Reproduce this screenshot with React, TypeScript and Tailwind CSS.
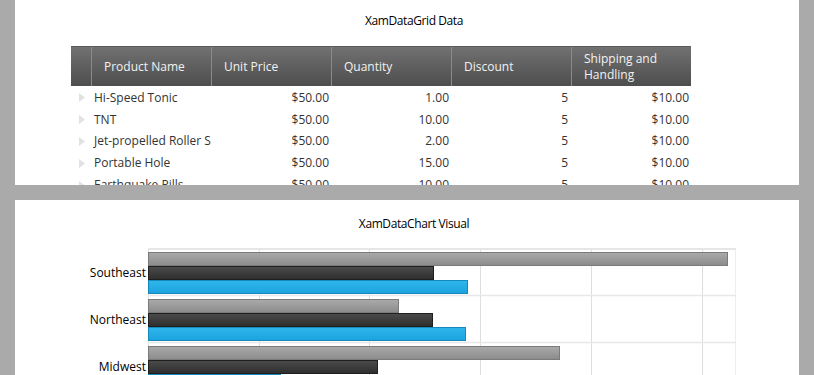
const rows = [
    { name: "Hi-Speed Tonic", price: "$50.00", qty: "1.00", discount: "5", shipping: "$10.00" },
    { name: "TNT", price: "$50.00", qty: "10.00", discount: "5", shipping: "$10.00" },
    { name: "Jet-propelled Roller Skates", price: "$50.00", qty: "2.00", discount: "5", shipping: "$10.00" },
    { name: "Portable Hole", price: "$50.00", qty: "15.00", discount: "5", shipping: "$10.00" },
    { name: "Earthquake Pills", price: "$50.00", qty: "10.00", discount: "5", shipping: "$10.00" },
];

const headers = ["Product Name", "Unit Price", "Quantity", "Discount", "Shipping and Handling"];

// widths in px for each series, measured against the plot
const regions = [
    { label: "Southeast", bars: [579, 285, 319] },
    { label: "Northeast", bars: [250, 284, 317] },
    { label: "Midwest", bars: [411, 229, 132] },
];

const BAND = 47;

function HeaderCell({ text }: { text: string }) {
    return (
        <div className="w-[120px] h-full flex items-center pl-3 pr-2 border-l border-[#8a8a8a] text-[12px] leading-[16px] text-[#f2f2f2]">
            <span className="w-[90px]">{text}</span>
        </div>
    );
}

function Chart() {
    const series = [
        { fill: "url(#gGray)", stroke: "#7a7a7a" },
        { fill: "url(#gDark)", stroke: "#1f1f1f" },
        { fill: "url(#gBlue)", stroke: "#1788bb" },
    ];
    return (
        <svg width={600} height={140} className="block">
            <defs>
                <linearGradient id="gGray" x1="0" y1="0" x2="0" y2="1">
                    <stop offset="0" stopColor="#aaaaaa" />
                    <stop offset="1" stopColor="#8b8b8b" />
                </linearGradient>
                <linearGradient id="gDark" x1="0" y1="0" x2="0" y2="1">
                    <stop offset="0" stopColor="#4b4b4b" />
                    <stop offset="1" stopColor="#2e2e2e" />
                </linearGradient>
                <linearGradient id="gBlue" x1="0" y1="0" x2="0" y2="1">
                    <stop offset="0" stopColor="#2fb6ec" />
                    <stop offset="1" stopColor="#1ca3df" />
                </linearGradient>
            </defs>
            {[0, 111, 221, 332, 443, 554].map((x) => (
                <line key={x} x1={x + 0.5} y1={0} x2={x + 0.5} y2={140} stroke="#dedede" strokeWidth={1} />
            ))}
            <line x1={587.5} y1={0} x2={587.5} y2={140} stroke="#eeeeee" strokeWidth={1} />
            <line x1={0} y1={1} x2={588} y2={1} stroke="#e6e6e6" strokeWidth={2} />
            {[BAND, BAND * 2].map((y) => (
                <line key={y} x1={0} y1={y + 0.5} x2={588} y2={y + 0.5} stroke="#e8e8e8" strokeWidth={1.5} />
            ))}
            {regions.map((r, i) =>
                r.bars.map((w, j) => (
                    <rect
                        key={r.label + j}
                        x={0.5}
                        y={i * BAND + 4.5 + j * 14}
                        width={w}
                        height={13}
                        fill={series[j].fill}
                        stroke={series[j].stroke}
                        strokeWidth={1}
                    />
                ))
            )}
        </svg>
    );
}

export default function App() {
    return (
        <div className="h-[375px] w-[814px] overflow-hidden bg-[#aaaaaa] px-[15px] flex flex-col gap-[15px] font-['Open_Sans',sans-serif]">
            {/* Grid panel */}
            <div className="h-[185px] shrink-0 bg-white overflow-hidden">
                <div className="h-[42px] flex items-center justify-center pl-[14px] text-[12px] text-black tracking-[-0.4px]">
                    XamDataGrid Data
                </div>
                <div className="ml-[56px] w-[620px]">
                    <div className="h-[40px] mt-[4px] flex bg-gradient-to-b from-[#717171] to-[#4e4e4e] border-t border-[#5a5a5a]">
                        <div className="w-[20px] h-full" />
                        {headers.map((h) => (
                            <HeaderCell key={h} text={h} />
                        ))}
                    </div>
                    <div className="pt-[1px]">
                        {rows.map((r) => (
                            <div key={r.name} className="h-[21.8px] flex items-center text-[12px] text-[#333333]">
                                <div className="w-[20px] flex justify-center pl-[2px]">
                                    <svg width="6" height="9" viewBox="0 0 6 9">
                                        <path d="M0 0 L6 4.5 L0 9 Z" fill="#e2e2e2" />
                                    </svg>
                                </div>
                                <div className="w-[120px] pl-[3px] pr-[3px] overflow-hidden whitespace-nowrap">{r.name}</div>
                                <div className="w-[120px] pr-[2px] text-right">{r.price}</div>
                                <div className="w-[120px] pr-[2px] text-right">{r.qty}</div>
                                <div className="w-[120px] pr-[3px] text-right">{r.discount}</div>
                                <div className="w-[120px] pr-[2px] text-right">{r.shipping}</div>
                            </div>
                        ))}
                    </div>
                </div>
            </div>

            {/* Chart panel */}
            <div className="flex-1 bg-white overflow-hidden">
                <div className="h-[48px] flex items-center justify-center pl-[14px] text-[12px] text-black tracking-[-0.4px]">
                    XamDataChart Visual
                </div>
                <div className="flex">
                    <div className="w-[133px] flex flex-col">
                        {regions.map((r) => (
                            <div key={r.label} className="h-[47px] flex items-center justify-end pr-[2px] pt-[3px] text-[12px] text-black">
                                {r.label}
                            </div>
                        ))}
                    </div>
                    <Chart />
                </div>
            </div>
        </div>
    );
}
